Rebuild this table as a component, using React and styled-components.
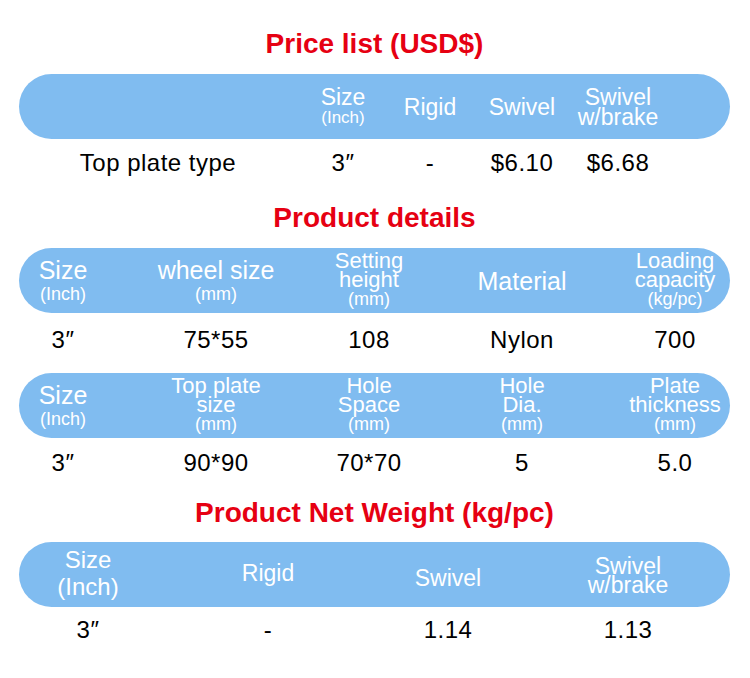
import React from 'react'
import styled, { createGlobalStyle } from 'styled-components'

const GlobalStyle = createGlobalStyle`
  body {
    margin: 0;
    background: #ffffff;
    font-family: "Liberation Sans", Arial, sans-serif;
  }
`

// column layouts of each table, measured off the picture
const PRICE_COLS = { cols: '278px 92px 82px 102px 90px', gap: 0 }
const DETAIL_COLS = { cols: 'repeat(5, 88px)', gap: 65 }
const WEIGHT_COLS = { cols: 'repeat(4, 138px)', gap: 42 }

const priceHead = [
  { lines: [] },
  { lines: [['Size', 23, 22], ['(Inch)', 17, 20]] },
  { lines: [['Rigid', 23, 24]] },
  { lines: [['Swivel', 23, 24]] },
  { lines: [['Swivel', 23, 20], ['w/brake', 23, 20]] },
]
const priceRow = ['Top plate type', '3″', '-', '$6.10', '$6.68']

const detailHead = [
  { lines: [['Size', 25, 26], ['(Inch)', 18, 22]] },
  { lines: [['wheel size', 25, 26], ['(mm)', 18, 22]] },
  { lines: [['Setting', 22, 19], ['height', 22, 19], ['(mm)', 18, 21]] },
  { lines: [['Material', 25, 26]] },
  { lines: [['Loading', 22, 19], ['capacity', 22, 19], ['(kg/pc)', 18, 21]] },
]
const detailRow = ['3″', '75*55', '108', 'Nylon', '700']

const plateHead = [
  { lines: [['Size', 25, 26], ['(Inch)', 18, 22]] },
  { lines: [['Top plate', 22, 19], ['size', 22, 19], ['(mm)', 18, 21]] },
  { lines: [['Hole', 22, 19], ['Space', 22, 19], ['(mm)', 18, 21]] },
  { lines: [['Hole', 22, 19], ['Dia.', 22, 19], ['(mm)', 18, 21]] },
  { lines: [['Plate', 22, 19], ['thickness', 22, 19], ['(mm)', 18, 21]] },
]
const plateRow = ['3″', '90*90', '70*70', '5', '5.0']

const weightHead = [
  { lines: [['Size', 24, 27], ['(Inch)', 24, 27]], nudge: -4 },
  { lines: [['Rigid', 23, 24]], nudge: -4 },
  { lines: [['Swivel', 23, 24]], nudge: 6 },
  { lines: [['Swivel', 23, 19], ['w/brake', 23, 19]], nudge: 2 },
]
const weightRow = ['3″', '-', '1.14', '1.13']

function Table({ layout, head, row, top, rowHeight }) {
  return (
    <>
      <Bar $cols={layout.cols} $gap={layout.gap} $top={top}>
        {head.map((cell, i) => (
          <HeadCell key={i} $nudge={cell.nudge || 0}>
            {cell.lines.map(([text, size, lh]) => (
              <HeadLine key={text} $size={size} $lh={lh}>{text}</HeadLine>
            ))}
          </HeadCell>
        ))}
      </Bar>
      <Row $cols={layout.cols} $gap={layout.gap} $height={rowHeight}>
        {row.map((text, i) => (
          <DataCell key={i}>{text}</DataCell>
        ))}
      </Row>
    </>
  )
}

export default function App() {
  return (
    <Page>
      <GlobalStyle />
      <Title $top={0}>Price list (USD$)</Title>
      <Table layout={PRICE_COLS} head={priceHead} row={priceRow} top={14} rowHeight={48} />

      <Title $top={15}>Product details</Title>
      <Table layout={DETAIL_COLS} head={detailHead} row={detailRow} top={14} rowHeight={54} />
      <Table layout={DETAIL_COLS} head={plateHead} row={plateRow} top={6} rowHeight={50} />

      <Title $top={9}>Product Net Weight (kg/pc)</Title>
      <Table layout={WEIGHT_COLS} head={weightHead} row={weightRow} top={13} rowHeight={46} />
    </Page>
  )
}

const Page = styled.div`
  width: 750px;
  height: 678px;
  box-sizing: border-box;
  padding: 28px 20px 0 19px;
  display: flex;
  flex-direction: column;
  overflow: hidden;
`

const Title = styled.h2`
  margin: ${p => p.$top}px 0 0;
  font-size: 28px;
  line-height: 32px;
  font-weight: bold;
  color: #e60012;
  text-align: center;
`
// 파란 머리줄
const Bar = styled.div`
  margin-top: ${p => p.$top}px;
  height: 65px;
  display: grid;
  grid-template-columns: ${p => p.$cols};
  column-gap: ${p => p.$gap}px;
  background: #80bcf0;
  border-radius: 33px;
`

const HeadCell = styled.div`
  display: flex;
  flex-direction: column;
  align-items: center;
  justify-content: center;
  padding-top: ${p => Math.max(p.$nudge, 0)}px;
  padding-bottom: ${p => Math.max(-p.$nudge, 0)}px;
  white-space: nowrap;
  color: #ffffff;
`

const HeadLine = styled.span`
  display: block;
  font-size: ${p => p.$size}px;
  line-height: ${p => p.$lh}px;
`

const Row = styled.div`
  height: ${p => p.$height}px;
  display: grid;
  grid-template-columns: ${p => p.$cols};
  column-gap: ${p => p.$gap}px;
`

const DataCell = styled.div`
  display: flex;
  justify-content: center;
  align-items: center;
  white-space: nowrap;
  font-size: 24px;
  letter-spacing: 0.5px;
  color: #000000;
`
